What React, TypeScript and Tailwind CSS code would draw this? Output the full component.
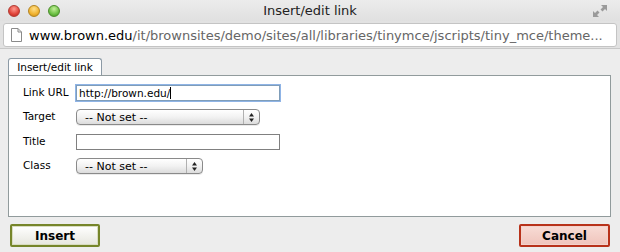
import React from "react";

const Arrows = () => (
  <svg width="7" height="11" viewBox="0 0 7 11" className="block">
    <path d="M3.5 1 L6 4.5 L1 4.5 Z" fill="#222" />
    <path d="M3.5 10 L6 6.5 L1 6.5 Z" fill="#222" />
  </svg>
);

const Select = ({ width }: { width: string }) => (
  <div
    className={`${width} h-[16px] flex items-stretch rounded-[4px] border border-[#8a8a8a] bg-gradient-to-b from-[#ffffff] via-[#f2f2f2] to-[#dcdcdc] shadow-[0_1px_0_rgba(0,0,0,0.08)]`}
  >
    <div className="flex-1 flex items-center pl-[8px] text-[11px] leading-none text-black">
      -- Not set --
    </div>
    <div className="w-[16px] flex items-center justify-center border-l border-[#b0b0b0]">
      <Arrows />
    </div>
  </div>
);

export default function App() {
  return (
    <div
      className="w-[620px] h-[252px] flex flex-col bg-[#ededed] overflow-hidden"
      style={{ fontFamily: '"DejaVu Sans", Verdana, sans-serif' }}
    >
      {/* Title bar */}
      <div className="h-[21px] grid grid-cols-[1fr_auto_1fr] items-center bg-gradient-to-b from-[#ececec] to-[#e0e0e0]">
        <div className="flex items-center gap-[8px] pl-[8px]">
          <span className="w-[12px] h-[12px] rounded-full border border-[#b23a32] bg-[radial-gradient(circle_at_50%_30%,#ff9a8f,#e0443a_60%,#b8271e)]" />
          <span className="w-[12px] h-[12px] rounded-full border border-[#b48421] bg-[radial-gradient(circle_at_50%_30%,#ffe08a,#f0b230_60%,#c98a13)]" />
          <span className="w-[12px] h-[12px] rounded-full border border-[#4a8c2a] bg-[radial-gradient(circle_at_50%_30%,#c4f09a,#6cc044_60%,#3f8e22)]" />
        </div>
        <div className="text-[13px] text-[#222] leading-none">Insert/edit link</div>
        <div className="flex justify-end pr-[12px]">
          <svg width="16" height="14" viewBox="0 0 16 14">
            <path d="M9 1 L15 1 L15 7 L13 5 L10.5 7.5 L8.5 5.5 L11 3 Z" fill="#9a9a9a" />
            <path d="M1 13 L1 7 L3 9 L5.5 6.5 L7.5 8.5 L5 11 L7 13 Z" fill="#9a9a9a" />
          </svg>
        </div>
      </div>

      {/* URL bar */}
      <div className="h-[28px] px-[3px] pt-[2px] pb-[1px] bg-[#e2e2e2] border-b border-[#c8c8c8]">
        <div className="h-full flex items-center bg-white border border-[#c4c4c4] rounded-[3px] pl-[7px] pr-[4px] overflow-hidden">
          <svg width="11" height="14" viewBox="0 0 11 14" className="shrink-0">
            <path d="M0.5 0.5 H7 L10.5 4 V13.5 H0.5 Z" fill="#fff" stroke="#8a8a8a" />
            <path d="M7 0.5 V4 H10.5" fill="none" stroke="#8a8a8a" />
          </svg>
          <div className="ml-[7px] text-[13px] leading-none whitespace-nowrap text-[#666]">
            <span className="text-black">www.brown.edu</span>/it/brownsites/demo/sites/all/libraries/tinymce/jscripts/tiny_mce/theme...
          </div>
        </div>
      </div>

      {/* Content */}
      <div className="flex-1 flex flex-col pl-[8px] pr-[9px] pt-[9px]">
        <div className="flex">
          <div className="h-[17px] w-[94px] flex items-center justify-center bg-white border border-b-0 border-[#8c9aa5] rounded-t-[3px] text-[10.5px] text-black leading-none">
            Insert/edit link
          </div>
        </div>
        <div className="h-[142px] bg-white border border-[#919b9c] pl-[14px] pt-[8px] flex flex-col text-[10.5px] text-black">
          <div className="flex items-center h-[18px]">
            <div className="w-[53px]">Link URL</div>
            <div className="w-[204px] h-[16px] border border-[#7f9db9] shadow-[0_0_0_1px_#8fb4e6] flex items-center pl-[2px] leading-none">
              http://brown.edu/<span className="inline-block w-px h-[12px] bg-black" />
            </div>
          </div>
          <div className="flex items-center h-[16px] mt-[7px]">
            <div className="w-[53px]">Target</div>
            <Select width="w-[184px]" />
          </div>
          <div className="flex items-center h-[16px] mt-[9px]">
            <div className="w-[53px]">Title</div>
            <div className="w-[204px] h-[16px] border border-[#808080]" />
          </div>
          <div className="flex items-center h-[16px] mt-[8px]">
            <div className="w-[53px]">Class</div>
            <Select width="w-[127px]" />
          </div>
        </div>
        <div className="flex justify-between mt-[7px] pl-[2px] pr-[1px]">
          <button className="w-[90px] h-[23px] rounded-[2px] border-[2px] border-[#76852a] bg-gradient-to-b from-[#ffffff] to-[#e6e6de] text-[12px] font-bold text-black leading-none shadow-[inset_0_0_0_1px_#d8dcc0]">
            Insert
          </button>
          <button className="w-[91px] h-[23px] rounded-[2px] border-[2px] border-[#b8321a] bg-gradient-to-b from-[#f8dcd6] to-[#efc4bb] text-[12px] font-bold text-black leading-none shadow-[inset_0_0_0_1px_#f3d2cb]">
            Cancel
          </button>
        </div>
      </div>
    </div>
  );
}
